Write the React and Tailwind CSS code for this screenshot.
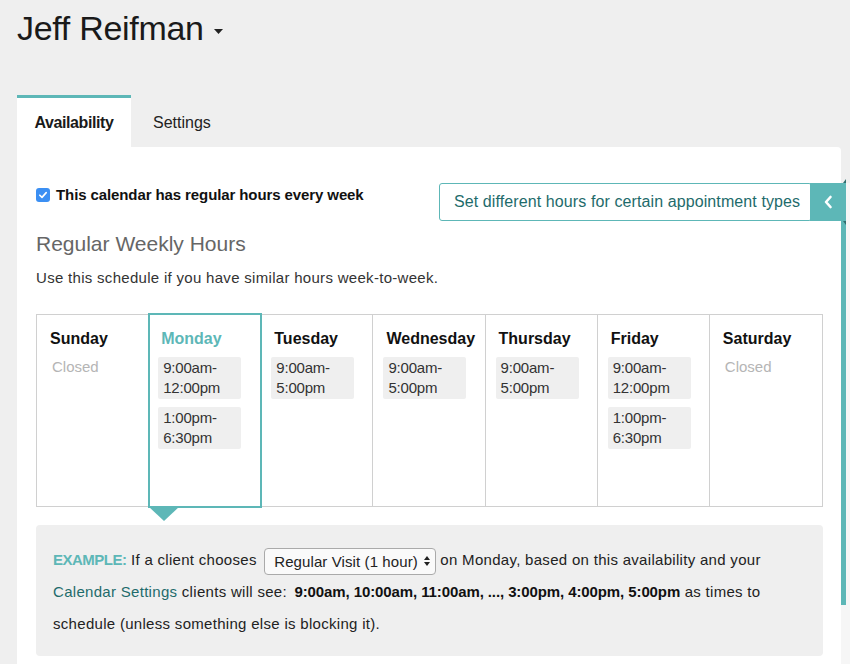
import { useState } from "react";

const DAYS = [
  { name: "Sunday", slots: [] },
  { name: "Monday", slots: ["9:00am-\n12:00pm", "1:00pm-\n6:30pm"], active: true },
  { name: "Tuesday", slots: ["9:00am-\n5:00pm"] },
  { name: "Wednesday", slots: ["9:00am-\n5:00pm"] },
  { name: "Thursday", slots: ["9:00am-\n5:00pm"] },
  { name: "Friday", slots: ["9:00am-\n12:00pm", "1:00pm-\n6:30pm"] },
  { name: "Saturday", slots: [] },
];

function DayColumn({ day, last }) {
  return (
    <div
      className={
        day.active
          ? "relative -my-[2px] -mx-px border-2 border-[#5db7b7] pl-[8px] pt-[13px] z-10"
          : "relative pl-[10px] pt-[13px] " + (last ? "" : "border-r border-[#d0d0d0]")
      }
    >
      <div
        className={
          "pl-[3px] text-[16px] leading-[22px] font-bold " +
          (day.active ? "text-[#5db7b7]" : "text-[#111]")
        }
      >
        {day.name}
      </div>
      <div className="mt-[7px] flex flex-col gap-[8px]">
        {day.slots.length === 0 && (
          <div className="pl-[5px] text-[15px] leading-[20px] text-[#b5b5b5]">Closed</div>
        )}
        {day.slots.map((s) => (
          <div
            key={s}
            className="w-[83px] rounded-[2px] bg-[#efefef] px-[5px] py-[1px] text-[15px] leading-[20px] text-[#333] whitespace-pre-line tracking-[-0.2px]"
          >
            {s}
          </div>
        ))}
      </div>
      {day.active && (
        <div className="absolute left-[-2px] top-full w-0 h-0 border-l-[16px] border-r-[16px] border-t-[15px] border-l-transparent border-r-transparent border-t-[#5db7b7]" />
      )}
    </div>
  );
}

export default function App() {
  const [regular, setRegular] = useState(true);

  return (
    <div className="relative w-[850px] h-[664px] overflow-hidden bg-[#efefef] font-['Liberation_Sans',Arial,sans-serif] text-[#222]">
      {/* Header */}
      <div className="pl-[17px] pt-[6px] flex items-center">
        <h1 className="text-[34px] leading-[44px] text-[#1a1a1a] tracking-[-0.3px]">Jeff Reifman</h1>
        <svg width="9" height="5" viewBox="0 0 9 5" className="ml-[10px] mt-[6px]">
          <path d="M0 0h9L4.5 5z" fill="#222" />
        </svg>
      </div>

      {/* Tabs */}
      <div className="mt-[45px] ml-[17px] flex h-[52px]">
        <div className="w-[114px] border-t-[3px] border-[#5db7b7] bg-white flex items-center justify-center text-[16px] font-bold text-[#1a1a1a] tracking-[-0.4px]">
          Availability
        </div>
        <div className="pl-[22px] pt-[3px] flex items-center text-[16px] text-[#222]">Settings</div>
      </div>

      {/* Card */}
      <div className="ml-[17px] w-[824px] h-[540px] bg-white rounded-tr-[4px] pl-[19px] pr-[18px] pt-[36px]">
        <div className="flex items-start justify-between">
          <label className="mt-[2px] flex items-center gap-[6px] text-[15px] leading-[20px] font-bold text-[#111] tracking-[-0.1px]">
            <span
              onClick={() => setRegular(!regular)}
              className="w-[14px] h-[14px] rounded-[3px] bg-[#3b8ff3] flex items-center justify-center"
            >
              {regular && (
                <svg width="10" height="10" viewBox="0 0 10 10">
                  <path d="M1.8 5.2l2.2 2.2 4.2-4.8" stroke="#fff" strokeWidth="1.6" fill="none" strokeLinecap="round" strokeLinejoin="round" />
                </svg>
              )}
            </span>
            This calendar has regular hours every week
          </label>
          <div className="mr-[11px] h-[38px] w-[373px] rounded-[3px] border border-[#5db7b7] flex items-center pl-[14px] text-[16px] text-[#1e6b6b] tracking-[0.1px]">
            Set different hours for certain appointment types
          </div>
        </div>

        <h2 className="mt-[9px] text-[21px] leading-[28px] text-[#666]">Regular Weekly Hours</h2>
        <p className="mt-[10px] text-[15px] leading-[20px] text-[#333] tracking-[0.3px]">
          Use this schedule if you have similar hours week-to-week.
        </p>

        {/* Week grid */}
        <div className="mt-[26px] grid grid-cols-7 h-[193px] border border-[#d0d0d0]">
          {DAYS.map((d, i) => (
            <DayColumn key={d.name} day={d} last={i === DAYS.length - 1} />
          ))}
        </div>

        {/* Example */}
        <div className="mt-[18px] rounded-[4px] bg-[#efefef] pl-[17px] pr-[20px] pt-[19px] pb-[16px] text-[15px] leading-[32px] text-[#222] tracking-[0.3px]">
          <span className="font-bold text-[#5db7b7] tracking-[-0.5px]">EXAMPLE:</span> If a client chooses{" "}
          <span className="ml-[3px] inline-flex items-center align-middle h-[27px] rounded-[4px] border border-[#aaa] bg-[#fafafa] pl-[9px] pr-[4px] leading-[25px] tracking-[0.1px]">
            Regular Visit (1 hour)
            <svg width="8" height="12" viewBox="0 0 8 12" className="ml-[5px]">
              <path d="M4 1L7 5H1z M4 11L7 7H1z" fill="#222" />
            </svg>
          </span>{" "}
          on Monday, based on this availability and your{" "}
          <span className="text-[#1e6b6b]">Calendar Settings</span> clients will see:{" "}
          <b className="ml-[3px] text-[#111] tracking-[-0.1px]">9:00am, 10:00am, 11:00am, ..., 3:00pm, 4:00pm, 5:00pm</b> as times to
          schedule (unless something else is blocking it).
        </div>
      </div>

      {/* Collapsed side drawer */}
      <div className="absolute left-[841px] top-[183px] w-[9px] h-[481px] bg-[#f6f6f6]" />
      <div className="absolute left-[841px] top-[183px] w-[5px] h-[422px] bg-[#5db7b7]" />
      <div className="absolute left-[810px] top-[183px] w-[36px] h-[38px] bg-[#5db7b7] flex items-center justify-center">
        <svg width="10" height="14" viewBox="0 0 10 14">
          <path d="M7.5 2L3 7l4.5 5" stroke="#fff" strokeWidth="2.6" fill="none" strokeLinecap="round" strokeLinejoin="round" />
        </svg>
      </div>
      <div className="absolute left-[843px] top-[179px] w-0 h-0 border-l-[3px] border-b-[4px] border-l-transparent border-b-[#2f6d6d]" />
      <div className="absolute left-[843px] top-[221px] w-0 h-0 border-l-[3px] border-t-[4px] border-l-transparent border-t-[#2f6d6d]" />
    </div>
  );
}
